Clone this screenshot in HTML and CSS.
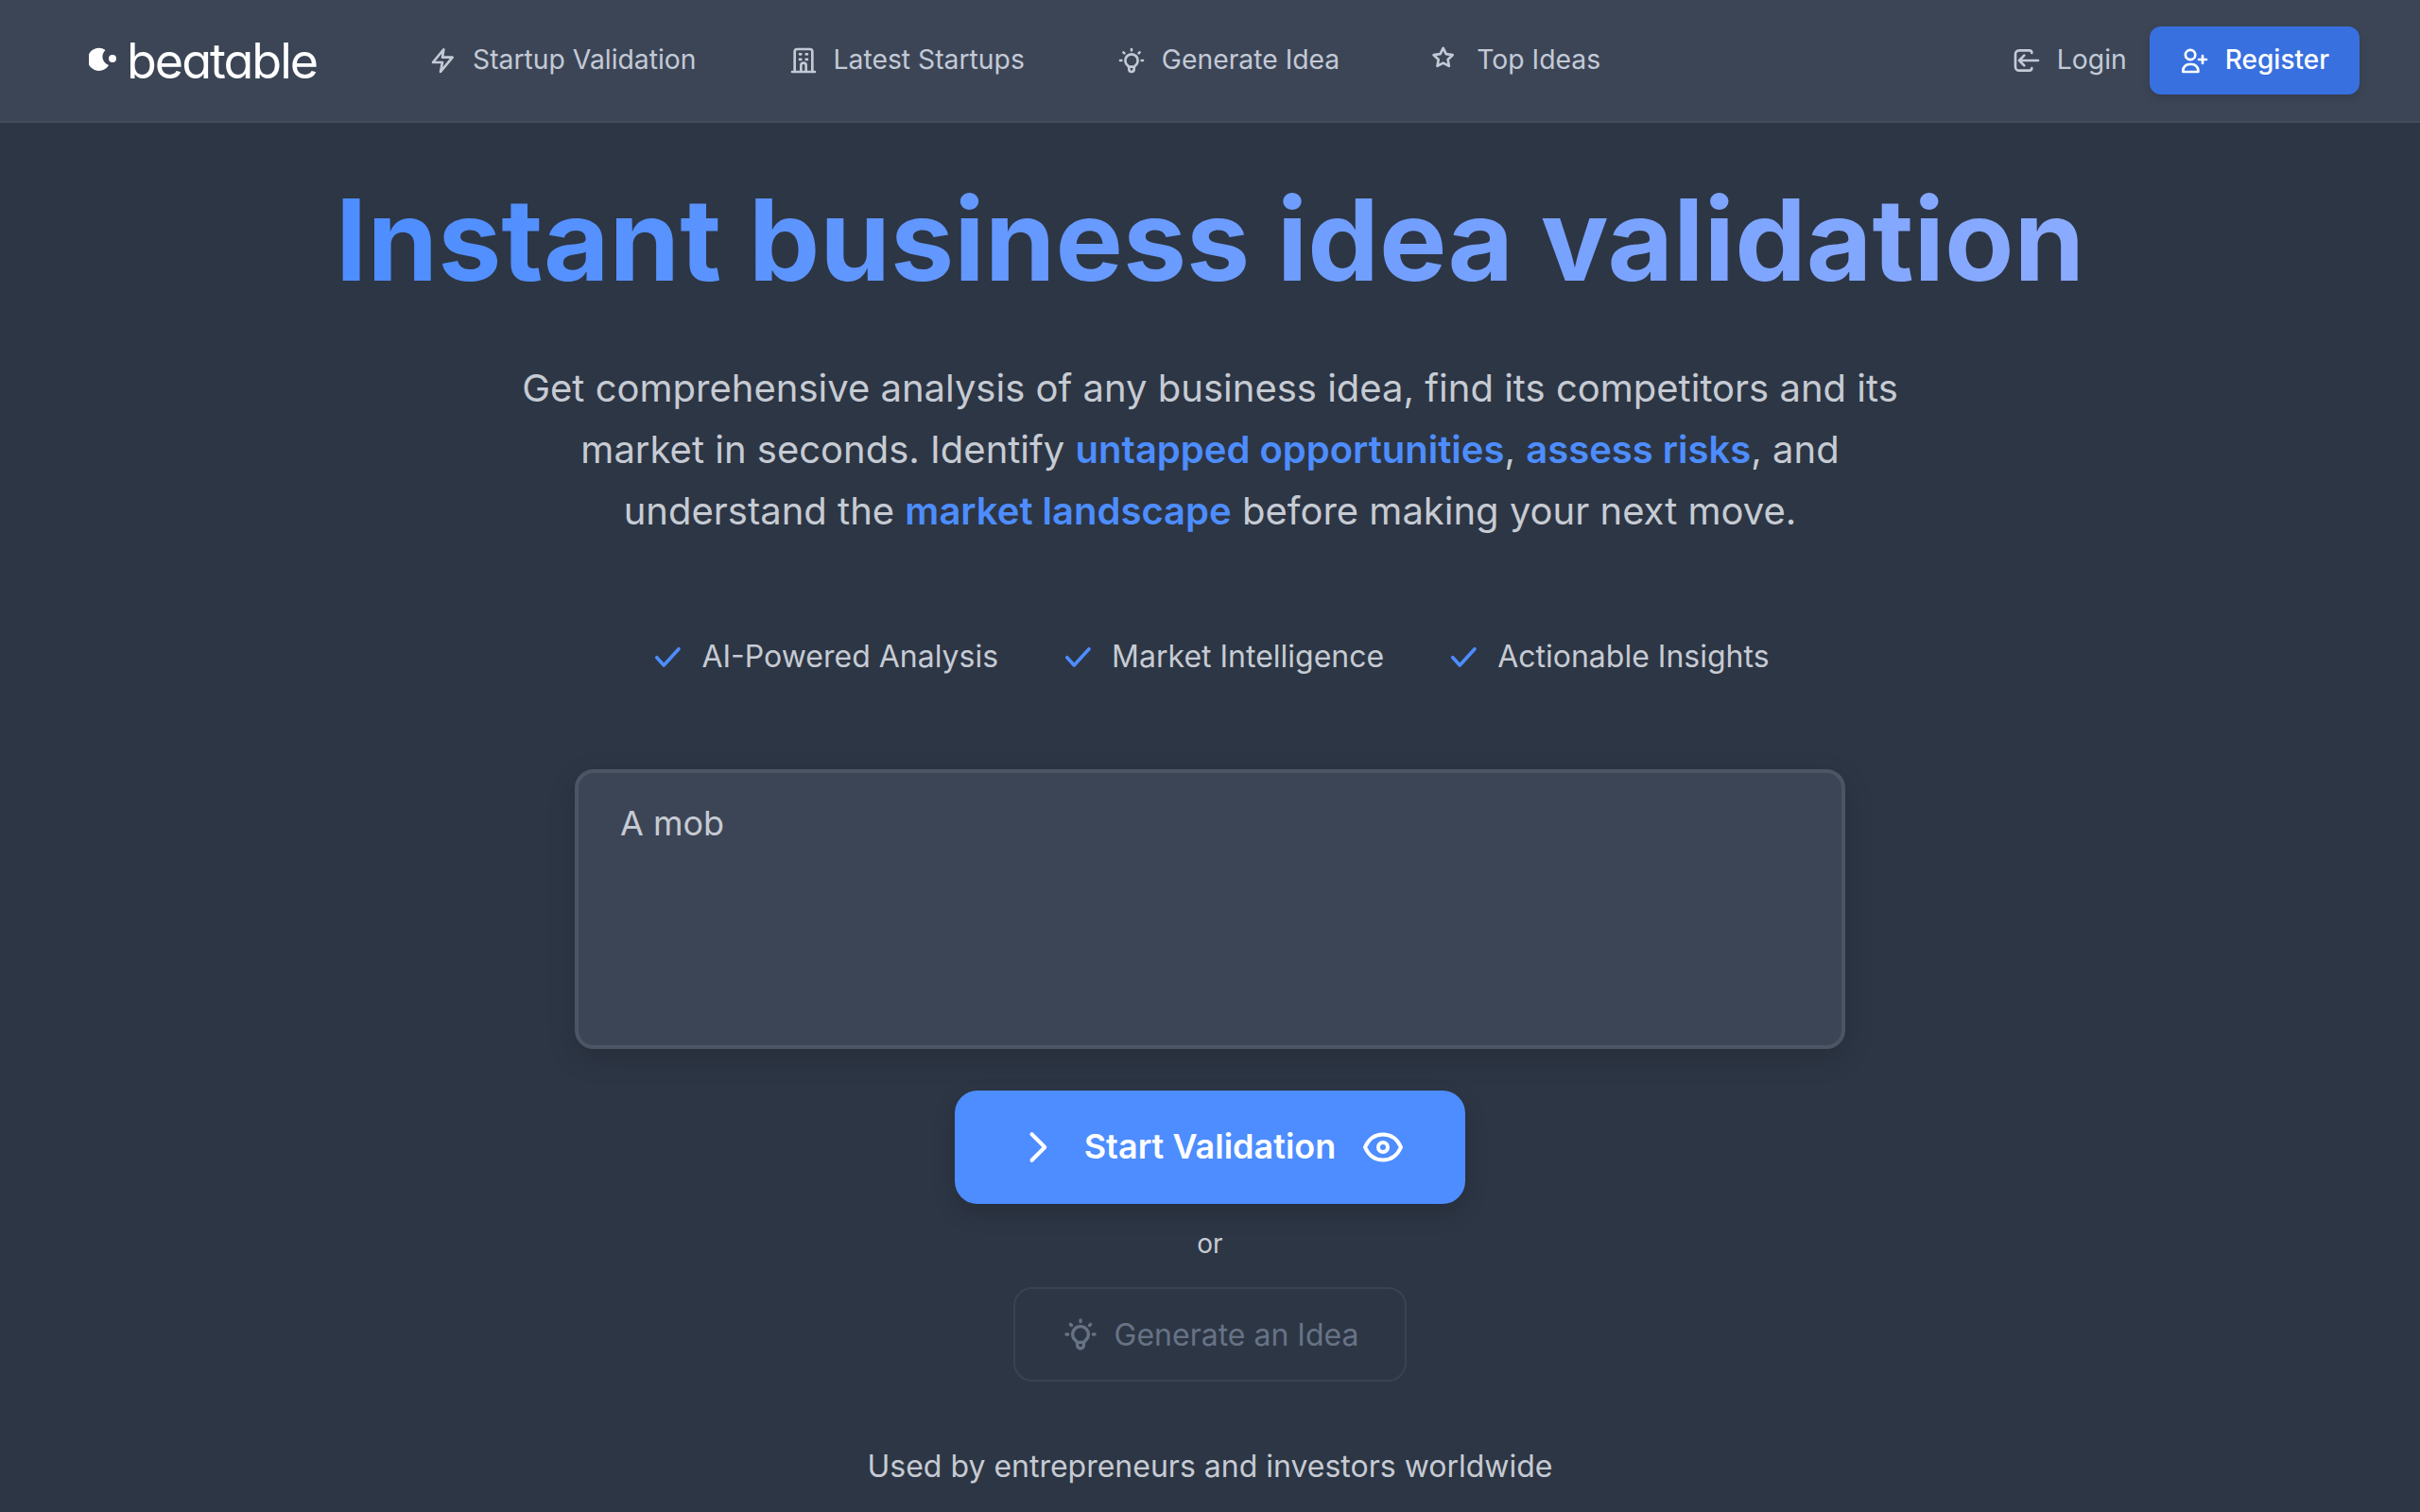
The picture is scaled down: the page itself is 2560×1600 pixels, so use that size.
FILE: index.html
```html
<!DOCTYPE html>
<html lang="en">
<head>
    <meta charset="UTF-8">
    <title>Beatable</title>
    <link rel="stylesheet" href="styles.css">
</head>
<body>
    <header class="navbar">
        <a class="logo">
            <svg class="logo-mark" viewBox="0 0 30 30"><path fill="#fff" d="M17.5 4A12 12 0 1 0 21 20A9.5 9.5 0 0 1 17.5 4z"/><circle cx="25" cy="13" r="4" fill="#fff"/></svg>
            <span class="logo-text">beatable</span>
        </a>
        <nav class="nav-links">
            <a class="nav-link"><svg class="icon" viewBox="0 0 24 24"><path d="M13 3.2L4.5 13.5H12L10.5 21L20 9.5h-8z"/></svg>Startup Validation</a>
            <a class="nav-link"><svg class="icon" viewBox="0 0 24 24"><path d="M3 21h18M5 21V5a2 2 0 0 1 2-2h10a2 2 0 0 1 2 2v16M9 7h1M14 7h1M9 11.2h1M14 11.2h1M10 21v-5a2 2 0 0 1 4 0v5"/></svg>Latest Startups</a>
            <a class="nav-link"><svg class="icon" viewBox="0 0 24 24"><path d="M3 12h1m8-9v1m8 8h1M5.6 5.6l.7.7m12.1-.7l-.7.7M9 16a5 5 0 1 1 6 0a3.5 3.5 0 0 0-1 3a2 2 0 0 1-4 0a3.5 3.5 0 0 0-1-3M9.7 17h4.6"/></svg>Generate Idea</a>
            <a class="nav-link"><svg class="icon" viewBox="0 0 24 24"><path transform="translate(.5 .7) scale(.75)" stroke-width="2.67" d="M12 17.75l-6.17 3.25l1.18-6.88l-5-4.87l6.9-1l3.09-6.25l3.09 6.25l6.9 1l-5 4.87l1.18 6.88z"/></svg>Top Ideas</a>
        </nav>
        <div class="nav-auth">
            <a class="nav-link"><svg class="icon" viewBox="0 0 24 24"><path d="M16 6a2 2 0 0 0-2-2H6a3 3 0 0 0-3 3v10a3 3 0 0 0 3 3h8a2 2 0 0 0 2-2M21 12H6m4-4l-4 4l4 4"/></svg>Login</a>
            <a class="btn-register"><svg class="icon" viewBox="0 0 24 24"><path d="M4.4 7.5a3.9 3.9 0 1 0 7.8 0a3.9 3.9 0 0 0-7.8 0M2.5 21v-1a5 5 0 0 1 5-5h2a5 5 0 0 1 5 5v1zM15 11.25h6M18 8.25v6"/></svg>Register</a>
        </div>
    </header>

    <main class="hero">
        <h1 class="hero-title">Instant business idea validation</h1>
        <p class="hero-text">Get comprehensive analysis of any business idea, find its competitors and its market in seconds. Identify <b>untapped opportunities</b>, <b>assess risks</b>, and understand the <b>market landscape</b> before making your next move.</p>

        <ul class="features">
            <li><svg class="icon check" viewBox="0 0 24 24"><path d="M4.5 12.5l5 5.5L20 6.5"/></svg>AI-Powered Analysis</li>
            <li><svg class="icon check" viewBox="0 0 24 24"><path d="M4.5 12.5l5 5.5L20 6.5"/></svg>Market Intelligence</li>
            <li><svg class="icon check" viewBox="0 0 24 24"><path d="M4.5 12.5l5 5.5L20 6.5"/></svg>Actionable Insights</li>
        </ul>

        <textarea class="idea-input">A mob</textarea>

        <button class="btn-start">
            <svg class="icon chevron" viewBox="0 0 24 24"><path d="M9 4.5l7.5 7.5L9 19.5"/></svg>
            <span>Start Validation</span>
            <svg class="icon eye" viewBox="0 0 44 44"><circle cx="22" cy="22" r="5"/><path d="M41 22c-4 9-10.5 13.5-19 13.5S7 31 3 22c4-9 10.5-13.5 19-13.5S37 13 41 22z"/></svg>
        </button>
        <div class="or">or</div>
        <button class="btn-generate"><svg class="icon" viewBox="0 0 24 24"><path d="M3 12h1m8-9v1m8 8h1M5.6 5.6l.7.7m12.1-.7l-.7.7M9 16a5 5 0 1 1 6 0a3.5 3.5 0 0 0-1 3a2 2 0 0 1-4 0a3.5 3.5 0 0 0-1-3M9.7 17h4.6"/></svg>Generate an Idea</button>

        <p class="used-by">Used by entrepreneurs and investors worldwide</p>
    </main>
</body>
</html>
```

FILE: styles.css
```css
html, body {
    height: 100%;
}
body {
    margin: 0;
    overflow: hidden;
    background: #2d3645;
    color: #c6cbd3;
    font-family: Inter, "Noto Sans", sans-serif;
}
.icon {
    width: 32px;
    height: 32px;
    flex-shrink: 0;
    fill: none;
    stroke: currentColor;
    stroke-width: 2;
    stroke-linecap: round;
    stroke-linejoin: round;
}
.navbar {
    display: flex;
    align-items: center;
    height: 128px;
    padding: 0 64px 0 94px;
    background: #3c4556;
    border-bottom: 2px solid #454e5e;
}
.logo {
    display: flex;
    align-items: center;
    gap: 10px;
    width: 358px;
    color: #fff;
}
.logo-mark {
    width: 30px;
    height: 30px;
}
.logo-text {
    font-size: 52px;
    font-weight: 400;
    letter-spacing: -2px;
    font-feature-settings: "cv11";
}
.nav-links {
    display: flex;
    gap: 97px;
}
.nav-link {
    display: flex;
    align-items: center;
    gap: 16px;
    padding-bottom: 3px;
    font-size: 28.3px;
    color: #c3cad6;
}
.nav-link .icon {
    margin-top: 3px;
}
.nav-auth {
    display: flex;
    align-items: center;
    gap: 24px;
    margin-left: auto;
}
.btn-register {
    display: flex;
    align-items: center;
    gap: 16px;
    box-sizing: border-box;
    height: 72px;
    padding: 0 32px 3px;
    border-radius: 12px;
    background: #3870e0;
    box-shadow: 0 4px 10px rgba(0, 0, 0, 0.12);
    color: #fff;
    font-size: 28px;
    font-weight: 500;
}
.btn-register .icon {
    margin-top: 3px;
}
.hero {
    display: flex;
    flex-direction: column;
    align-items: center;
}
.hero-title {
    margin: 64px 0 0;
    font-size: 120px;
    line-height: 1;
    font-weight: 700;
    background: linear-gradient(to right, #4d8dff, #8aabff);
    -webkit-background-clip: text;
    background-clip: text;
    color: transparent;
}
.hero-text {
    width: 1500px;
    margin: 64px 0 0;
    font-size: 40px;
    line-height: 65px;
    text-align: center;
}
.hero-text b {
    font-weight: 600;
    color: #4d8dff;
}
.features {
    display: flex;
    gap: 66px;
    margin: 102px 0 0;
    padding: 0;
    list-style: none;
    font-size: 32px;
}
.features li {
    display: flex;
    align-items: center;
    gap: 18px;
}
.check {
    width: 36px;
    height: 36px;
    color: #4d8dff;
    stroke-width: 2.4;
}
.idea-input {
    box-sizing: border-box;
    width: 1344px;
    height: 296px;
    margin-top: 100px;
    padding: 31px 44px;
    background: #3c4556;
    border: 4px solid #4b5563;
    border-radius: 20px;
    box-shadow: 0 10px 30px rgba(0, 0, 0, 0.15);
    color: #c6cbd3;
    font-family: inherit;
    font-size: 36px;
    resize: none;
}
.btn-start {
    display: flex;
    align-items: center;
    justify-content: center;
    gap: 28px;
    width: 540px;
    height: 120px;
    margin-top: 44px;
    padding: 0 0 3px;
    border: none;
    border-radius: 24px;
    background: #4d8dff;
    box-shadow: 0 10px 24px rgba(0, 0, 0, 0.15);
    color: #fff;
    font-family: inherit;
    font-size: 36px;
    font-weight: 600;
}
.btn-start .icon {
    width: 44px;
    height: 44px;
    margin-top: 3px;
    stroke-width: 2.2;
}
.btn-start .eye {
    stroke-width: 4;
}
.or {
    margin-top: 25px;
    font-size: 28px;
    line-height: 34px;
}
.btn-generate {
    display: flex;
    align-items: center;
    justify-content: center;
    gap: 16px;
    width: 416px;
    height: 100px;
    margin-top: 29px;
    background: transparent;
    border: 2px solid #3a4353;
    border-radius: 20px;
    color: #677385;
    font-family: inherit;
    font-size: 32px;
}
.btn-generate .icon {
    width: 40px;
    height: 40px;
}
.used-by {
    margin: 70px 0 0;
    font-size: 32px;
    line-height: 40px;
}
```
